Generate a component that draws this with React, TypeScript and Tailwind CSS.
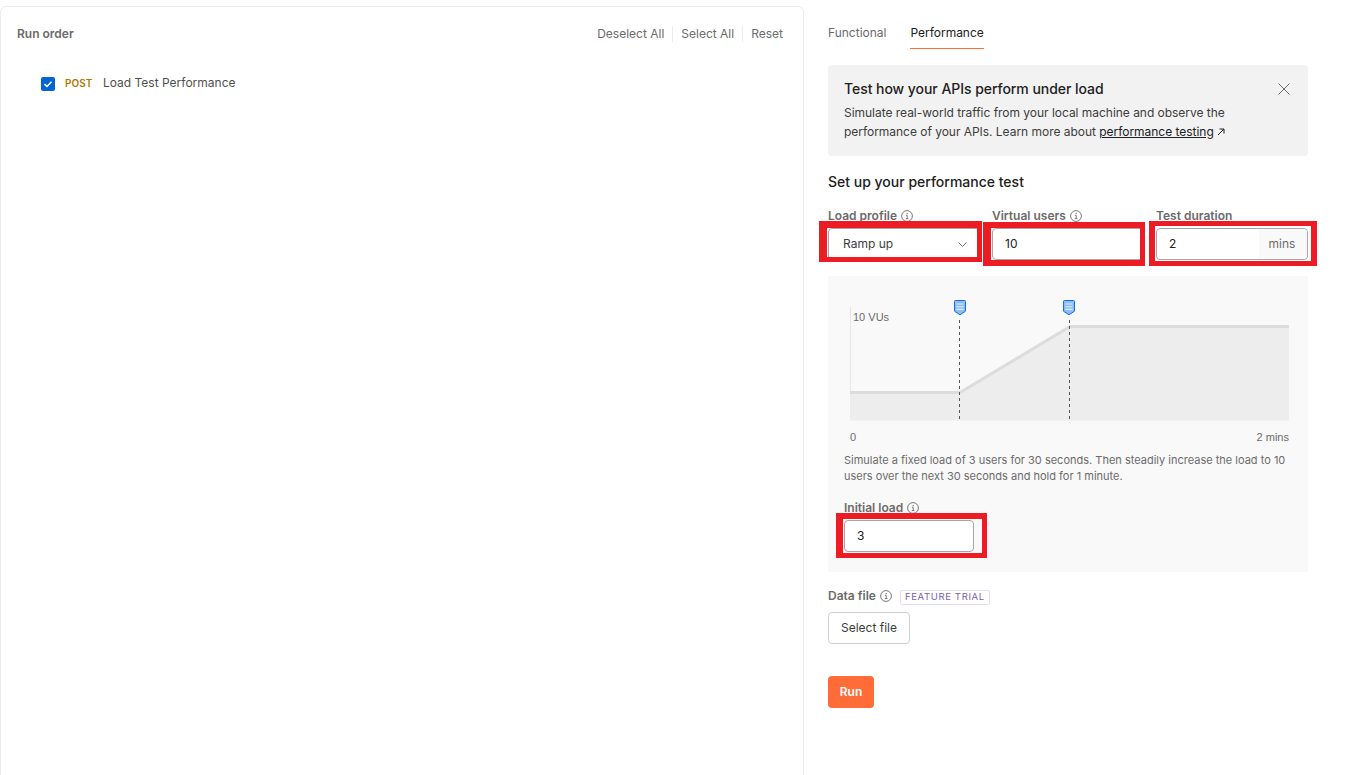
const font = "font-['Inter','Noto_Sans',sans-serif]"

const InfoIcon = () => (
  <svg width="12" height="12" viewBox="0 0 12 12" fill="none" className="shrink-0">
    <circle cx="6" cy="6" r="5.4" stroke="#6b6b6b" strokeWidth="0.9" />
    <path d="M4.9 5.3H6.2V8.4M4.8 8.6H7.4" stroke="#6b6b6b" strokeWidth="0.9" />
    <rect x="5.6" y="3" width="1.1" height="1.1" fill="#6b6b6b" />
  </svg>
)

const Label = ({ text, info = true }: { text: string; info?: boolean }) => (
  <div className="flex h-[14px] items-center gap-[4px] text-[12px] leading-[14px] font-semibold text-[#6b6b6b]">
    <span>{text}</span>
    {info && <InfoIcon />}
  </div>
)

const Marker = () => (
  <svg width="14" height="16" viewBox="0 0 14 16" className="absolute top-0 left-[-7px]">
    <path
      d="M1.5 1.5a1 1 0 0 1 1-1h9a1 1 0 0 1 1 1v9.7L7 14.8l-5.5-3.6z"
      fill="#8fbcf3"
      stroke="#0f6fe0"
      strokeWidth="1"
    />
    <path d="M3.5 4h7M3.5 6.7h7M3.5 9.4h7" stroke="#dcebfc" strokeWidth="1.1" />
  </svg>
)

const Chart = () => (
  <div className="relative h-[125px]">
    <svg width="448" height="125" viewBox="0 0 448 125" className="absolute top-0 left-0">
      <path d="M6.5 7V120" stroke="#e6e6e6" strokeWidth="1" />
      <path d="M6 92H116L226 26H445V120H6z" fill="#ededed" />
      <path d="M6 92.5H116L226 26.5H445" fill="none" stroke="#dcdcdc" strokeWidth="3" />
      <path d="M6 120.5H446" stroke="#f2f2f2" strokeWidth="1" />
      <path d="M115.5 20V121M225.5 20V121" stroke="#555555" strokeWidth="1" strokeDasharray="3 3" />
    </svg>
    <span className="absolute top-[10px] left-[9px] font-['Liberation_Sans',sans-serif] text-[11px] leading-[14px] text-[#6b6b6b]">
      10 VUs
    </span>
    <div className="absolute top-0 left-[115.5px]">
      <Marker />
    </div>
    <div className="absolute top-0 left-[225px]">
      <Marker />
    </div>
  </div>
)

export default function App() {
  return (
    <div className={`${font} flex h-[775px] overflow-hidden bg-white text-[13px] text-[#212121]`}>
      <section className="mt-[6px] h-[769px] w-[804px] shrink-0 rounded-t-[6px] border-x border-t border-[#ededed]">
        <header className="flex items-center justify-between pt-[19px] pr-[20px] pl-[16px]">
          <span className="text-[12px] leading-[16px] font-semibold text-[#6b6b6b]">Run order</span>
          <div className="flex items-center text-[12px] leading-[16px] text-[#6b6b6b]">
            <span>Deselect All</span>
            <span className="mx-[8px] h-[16px] w-px bg-[#ededed]" />
            <span>Select All</span>
            <span className="mx-[8px] h-[16px] w-px bg-[#ededed]" />
            <span>Reset</span>
          </div>
        </header>
        <div className="mt-[34px] flex items-center pl-[40px]">
          <span className="flex h-[14px] w-[14px] translate-y-[1px] items-center justify-center rounded-[2px] bg-[#0265d2]">
            <svg width="10" height="10" viewBox="0 0 10 10" fill="none">
              <path d="M1.5 5.2L4 7.5L8.5 2.8" stroke="white" strokeWidth="1.6" />
            </svg>
          </span>
          <span className="ml-[10px] w-[38px] text-[10px] leading-[14px] font-semibold text-[#ad7a03]">POST</span>
          <span className="text-[12px] leading-[14px] text-[#4f4f4f]">Load Test Performance</span>
        </div>
      </section>

      <main className="ml-[24px] flex w-[480px] shrink-0 flex-col">
        <nav className="flex h-[49px] items-start gap-[24px] pt-[25px] text-[12px] leading-[16px]">
          <span className="text-[#6b6b6b]">Functional</span>
          <span className="h-[24px] border-b border-[#ff6c37] tracking-[-0.02px] text-[#212121]">Performance</span>
        </nav>

        <div className="relative mt-[16px] h-[91px] rounded-[4px] bg-[#f2f2f2] px-[16px] pt-[15px]">
          <h2 className="text-[14px] leading-[18px] font-medium tracking-[-0.05px] text-[#212121]">Test how your APIs perform under load</h2>
          <p className="mt-[5px] text-[12px] leading-[19px] tracking-[-0.03px] text-[#3d3d3d]">
            Simulate real-world traffic from your local machine and observe the
            <br />
            performance of your APIs. Learn more about{" "}
            <span className="text-[#212121] underline">performance testing</span>{" "}
            <svg width="8" height="8" viewBox="0 0 8 8" fill="none" className="inline align-[0px]">
              <path d="M1 7L7 1M2.5 1H7V5.5" stroke="#212121" strokeWidth="1" />
            </svg>
          </p>
          <svg width="12" height="12" viewBox="0 0 12 12" fill="none" className="absolute top-[18px] right-[18px]">
            <path d="M0.5 0.5L11.5 11.5M11.5 0.5L0.5 11.5" stroke="#6b6b6b" strokeWidth="1" />
          </svg>
        </div>

        <h3 className="mt-[17px] text-[14px] leading-[18px] font-medium text-[#212121]">Set up your performance test</h3>

        <div className="mt-[18px] grid grid-cols-3 gap-x-[12px]">
          <div>
            <Label text="Load profile" />
            <div className="relative mt-[5px] flex h-[32px] items-center justify-between rounded-[4px] border border-[#a6a6a6] pr-[11px] pl-[14px] text-[12px] text-[#3d3d3d]">
              <span>Ramp up</span>
              <svg width="9" height="5" viewBox="0 0 9 5" fill="none" className="mr-[1px]">
                <path d="M0.5 0.5L4.5 4.5L8.5 0.5" stroke="#6b6b6b" strokeWidth="1" />
              </svg>
              <div className="absolute top-[-8px] right-[-3px] bottom-[-3px] left-[-10px] border-t-[7px] border-r-[5px] border-b-[5px] border-l-[8px] border-[#ed1c24]" />
            </div>
          </div>
          <div>
            <Label text="Virtual users" />
            <div className="relative mt-[5px] flex h-[32px] items-center rounded-[4px] border border-[#a6a6a6] pl-[12px] text-[12px] text-[#212121]">
              <span>10</span>
              <div className="absolute top-[-7px] right-[-2px] bottom-[-7px] left-[-10px] border-t-[6px] border-r-[5px] border-b-[6px] border-l-[8px] border-[#ed1c24]" />
            </div>
          </div>
          <div>
            <Label text="Test duration" info={false} />
            <div className="relative mt-[5px] flex h-[32px] items-center rounded-[4px] border border-[#a6a6a6] text-[12px] text-[#212121]">
              <span className="flex-1 pl-[12px]">2</span>
              <span className="flex h-full w-[48px] items-center justify-center rounded-r-[4px] bg-[#f9f9f9] pr-[2px] text-[#6b6b6b]">mins</span>
              <div className="absolute top-[-8px] right-[-10px] bottom-[-7px] left-[-8px] border-x-[6px] border-y-[5px] border-[#ed1c24]" />
            </div>
          </div>
        </div>

        <div className="mt-[16px] h-[296px] bg-[#f9f9f9] px-[16px] pt-[24px]">
          <Chart />
          <div className="mt-[5px] flex justify-between pr-[3px] pl-[6px] font-['Liberation_Sans',sans-serif] text-[11px] leading-[14px] text-[#6b6b6b]">
            <span>0</span>
            <span>2 mins</span>
          </div>
          <p className="mt-[8px] text-[11px] leading-[16px] text-[#6b6b6b]">
            Simulate a fixed load of 3 users for 30 seconds. Then steadily increase the load to 10 users over the next 30 seconds and hold for 1 minute.
          </p>
          <div className="mt-[17px]">
            <Label text="Initial load" />
          </div>
          <div className="relative mt-[5px] flex h-[32px] w-[130px] items-center rounded-[4px] border border-[#a6a6a6] bg-white pl-[12px] text-[12px] text-[#212121]">
            <span>3</span>
            <div className="absolute top-[-8px] right-[-14px] bottom-[-7px] left-[-9px] border-t-[6px] border-r-[5px] border-b-[5px] border-l-[7px] border-[#ed1c24]" />
          </div>
        </div>

        <div className="mt-[16px] flex h-[16px] items-center gap-[8px]">
          <Label text="Data file" />
          <span className="mt-[2px] flex h-[15px] items-center rounded-[2px] border border-[#e6dcf7] px-[4px] text-[9.5px] tracking-[0.65px] text-[#7a5fae]">
            FEATURE TRIAL
          </span>
        </div>
        <button className="mt-[8px] h-[32px] w-[82px] rounded-[4px] border border-[#d0d0d0] text-[12px] text-[#3d3d3d]">Select file</button>
        <button className="mt-[32px] h-[32px] w-[46px] rounded-[4px] bg-[#ff6c37] text-[12px] font-semibold text-white">Run</button>
      </main>
    </div>
  )
}
